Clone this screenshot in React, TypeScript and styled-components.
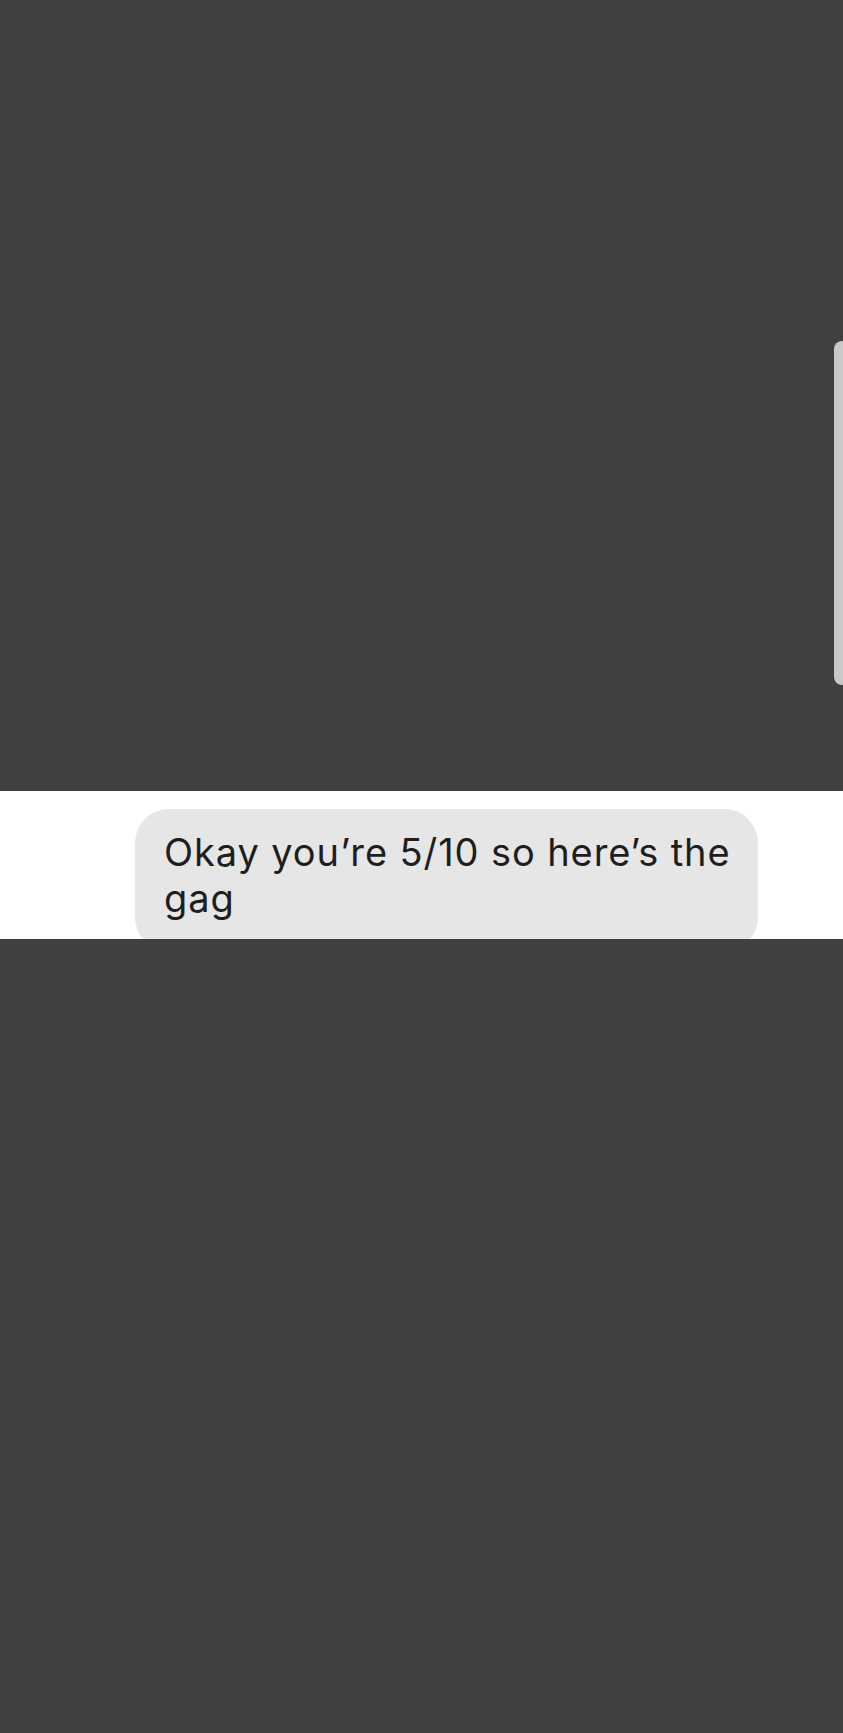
import React from "react";
import styled, { createGlobalStyle } from "styled-components";

const GlobalStyle = createGlobalStyle`
  html, body {
    margin: 0;
    padding: 0;
    background: #404040;
  }
  body {
    font-family: Inter, "Liberation Sans", Arial, sans-serif;
  }
`;

const Page = styled.div`
  position: relative;
  width: 843px;
  height: 1733px;
  display: flex;
  flex-direction: column;
  background: #404040;
  overflow: hidden;
`;

const Dim = styled.div<{ $h: number }>`
  height: ${(p) => p.$h}px;
  flex: none;
  background: #404040;
`;

const Strip = styled.div`
  height: 148px;
  flex: none;
  background: #ffffff;
  overflow: hidden;
  padding: 18px 0 0 135px;
  box-sizing: border-box;
`;

const Bubble = styled.div`
  width: 623px;
  box-sizing: border-box;
  background: #e6e6e7;
  border-radius: 34px;
  padding: 20px 14px 30px 29px;
  font-family: Inter, "Liberation Sans", Arial, sans-serif;
  font-size: 38px;
  line-height: 46px;
  letter-spacing: 0.9px;
  color: #1e1e1e;
`;

const ScrollThumb = styled.div`
  position: absolute;
  right: 0;
  top: 341px;
  width: 9px;
  height: 344px;
  background: #c9c9c9;
  border-radius: 8px 0 0 8px;
`;

export default function App() {
  return (
    <>
      <GlobalStyle />
      <Page>
        <Dim $h={791} />
        <Strip>
          <Bubble>Okay you’re 5/10 so here’s the gag</Bubble>
        </Strip>
        <Dim $h={794} />
        <ScrollThumb />
      </Page>
    </>
  );
}
